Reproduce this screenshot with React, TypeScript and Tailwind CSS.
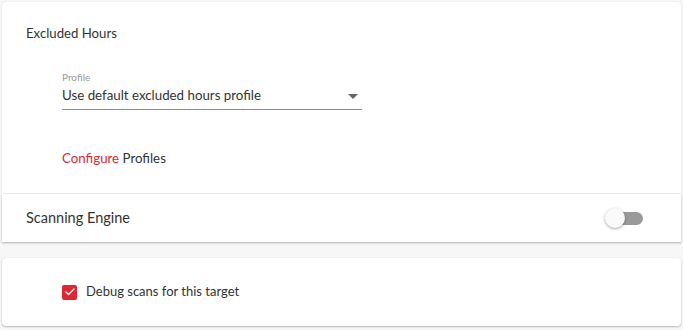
import { Check } from 'lucide-react';

const font = { fontFamily: 'Lato, "Liberation Sans", sans-serif' };

export default function App() {
  return (
    <div className="w-[683px] h-[330px] bg-[#f7f7f7] px-[2px] pt-[2px] flex flex-col text-[#333]" style={font}>
      {/* Excluded hours */}
      <div className="relative z-10 h-[191px] bg-white rounded-t-[4px] shadow-[0_0_2px_rgba(0,0,0,0.12)] pl-[24px] pt-[22px]">
        <div className="text-[13.2px] leading-[18px] text-[#333]">Excluded Hours</div>
        <div className="ml-[36px] mt-[29px] w-[300px]">
          <div className="text-[10px] leading-[12px] text-[#9a9a9a]">Profile</div>
          <div className="flex items-center justify-between h-[27px] border-b border-[#8c8c8c]">
            <span className="text-[13.3px] text-[#333]">Use default excluded hours profile</span>
            <svg width="10" height="5" viewBox="0 0 10 5" className="mr-[4px]">
              <path d="M0 0 L10 0 L5 5 Z" fill="#666" />
            </svg>
          </div>
          <div className="mt-[39px] text-[13.3px] leading-[18px]">
            <span className="text-[#e0262e]">Configure</span> Profiles
          </div>
        </div>
      </div>

      {/* Scanning engine */}
      <div className="mt-[1px] h-[48px] bg-white shadow-[0_1px_2px_rgba(0,0,0,0.3)] flex items-center justify-between pl-[24px] pr-[38px]">
        <span className="text-[14.5px] text-[#333]">Scanning Engine</span>
        <div className="relative w-[38px] h-[20px] flex items-center">
          <div className="ml-[4px] w-[34px] h-[13px] rounded-full bg-[#9a9a9a]" />
          <div className="absolute left-0 top-0 w-[20px] h-[20px] rounded-full bg-[#fafafa] shadow-[0_1px_3px_rgba(0,0,0,0.35)]" />
        </div>
      </div>

      {/* Debug */}
      <div className="mt-[16px] h-[68px] bg-white rounded-[4px] shadow-[0_1px_2px_rgba(0,0,0,0.25),0_0_1px_rgba(0,0,0,0.1)] flex items-center pl-[60px]">
        <div className="w-[15px] h-[15px] bg-[#e0262e] rounded-[2px] flex items-center justify-center">
          <Check size={12} color="white" strokeWidth={2.5} />
        </div>
        <span className="ml-[9px] text-[13px] text-[#333]">Debug scans for this target</span>
      </div>
    </div>
  );
}
